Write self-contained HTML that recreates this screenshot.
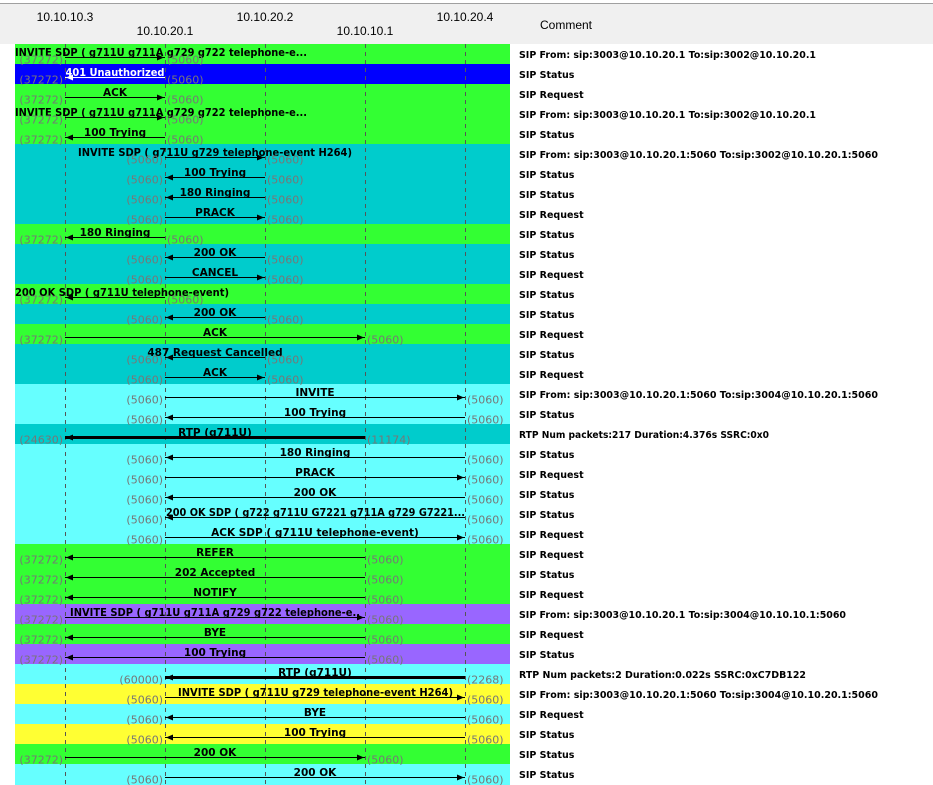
<!DOCTYPE html>
<html><head><meta charset="utf-8"><style>
html,body{margin:0;padding:0;background:#fff;width:933px;height:785px;overflow:hidden}
svg{display:block}
text{font-family:"DejaVu Sans","Liberation Sans",sans-serif}
.l{font-size:10.5px;font-weight:bold;text-anchor:middle;fill:#000}
.ls{font-size:10.5px;font-weight:bold;fill:#000}
.pe{font-size:11px;fill:#777;text-anchor:end}
.ps{font-size:11px;fill:#777}
.c{font-size:9.5px;font-weight:bold;fill:#000}
.h{font-family:"Liberation Sans",sans-serif;font-size:12px;fill:#000;text-anchor:middle}
line.a{stroke:#000;stroke-width:1}
line.t{stroke:#000;stroke-width:3}
</style></head><body>
<svg width="933" height="785" viewBox="0 0 933 785" xmlns="http://www.w3.org/2000/svg">
<rect x="0" y="0" width="933" height="785" fill="#fff"/>
<rect x="0" y="4" width="933" height="40" fill="#f0f0f0"/>
<rect x="0" y="3" width="933" height="1" fill="#a0a0a0"/>
<text class="h" x="65" y="21">10.10.10.3</text>
<text class="h" x="165" y="35">10.10.20.1</text>
<text class="h" x="265" y="21">10.10.20.2</text>
<text class="h" x="365" y="35">10.10.10.1</text>
<text class="h" x="465" y="21">10.10.20.4</text>
<text x="540" y="29" style="font-family:'Liberation Sans',sans-serif;font-size:12px">Comment</text>

<g>
<rect x="15" y="44" width="495" height="20" fill="#33ff33"/>
<rect x="15" y="64" width="495" height="20" fill="#0000ff"/>
<rect x="15" y="84" width="495" height="60" fill="#33ff33"/>
<rect x="15" y="144" width="495" height="80" fill="#00cccc"/>
<rect x="15" y="224" width="495" height="20" fill="#33ff33"/>
<rect x="15" y="244" width="495" height="40" fill="#00cccc"/>
<rect x="15" y="284" width="495" height="20" fill="#33ff33"/>
<rect x="15" y="304" width="495" height="20" fill="#00cccc"/>
<rect x="15" y="324" width="495" height="20" fill="#33ff33"/>
<rect x="15" y="344" width="495" height="40" fill="#00cccc"/>
<rect x="15" y="384" width="495" height="40" fill="#66ffff"/>
<rect x="15" y="424" width="495" height="20" fill="#00cccc"/>
<rect x="15" y="444" width="495" height="100" fill="#66ffff"/>
<rect x="15" y="544" width="495" height="60" fill="#33ff33"/>
<rect x="15" y="604" width="495" height="20" fill="#9966ff"/>
<rect x="15" y="624" width="495" height="20" fill="#33ff33"/>
<rect x="15" y="644" width="495" height="20" fill="#9966ff"/>
<rect x="15" y="664" width="495" height="20" fill="#66ffff"/>
<rect x="15" y="684" width="495" height="20" fill="#ffff33"/>
<rect x="15" y="704" width="495" height="20" fill="#66ffff"/>
<rect x="15" y="724" width="495" height="20" fill="#ffff33"/>
<rect x="15" y="744" width="495" height="20" fill="#33ff33"/>
<rect x="15" y="764" width="495" height="21" fill="#66ffff"/>
</g>
<g stroke="#555" stroke-width="1" stroke-dasharray="4,4">
<line x1="65.5" y1="44" x2="65.5" y2="785"/>
<line x1="165.5" y1="44" x2="165.5" y2="785"/>
<line x1="265.5" y1="44" x2="265.5" y2="785"/>
<line x1="365.5" y1="44" x2="365.5" y2="785"/>
<line x1="465.5" y1="44" x2="465.5" y2="785"/>
</g>

<g transform="translate(0,44)"><line class="a" x1="65" x2="165" y1="13.5" y2="13.5"/><polygon points="164,13.5 157,10.5 157,16.5"/>
<text class="ls" x="15" y="12" textLength="292" lengthAdjust="spacingAndGlyphs">INVITE SDP ( g711U g711A g729 g722 telephone-e...</text>
<text class="pe" x="63" y="19.5">(37272)</text><text class="ps" x="167" y="19.5">(5060)</text>
<text class="c" x="519" y="14" textLength="297" lengthAdjust="spacingAndGlyphs">SIP From: sip:3003@10.10.20.1 To:sip:3002@10.10.20.1</text></g>
<g transform="translate(0,64)"><line x1="65" x2="165" y1="13.5" y2="13.5" stroke="#fff"/><polygon points="66,13.5 73,10.5 73,16.5" fill="#fff"/>
<text class="l" x="115" y="12" style="fill:#fff;text-decoration:underline" textLength="99" lengthAdjust="spacingAndGlyphs">401 Unauthorized</text>
<text class="pe" x="63" y="19.5">(37272)</text><text class="ps" x="167" y="19.5">(5060)</text>
<text class="c" x="519" y="14">SIP Status</text></g>
<g transform="translate(0,84)"><line class="a" x1="65" x2="165" y1="13.5" y2="13.5"/><polygon points="164,13.5 157,10.5 157,16.5"/>
<text class="l" x="115" y="12">ACK</text>
<text class="pe" x="63" y="19.5">(37272)</text><text class="ps" x="167" y="19.5">(5060)</text>
<text class="c" x="519" y="14">SIP Request</text></g>
<g transform="translate(0,104)"><line class="a" x1="65" x2="165" y1="13.5" y2="13.5"/><polygon points="164,13.5 157,10.5 157,16.5"/>
<text class="ls" x="15" y="12" textLength="292" lengthAdjust="spacingAndGlyphs">INVITE SDP ( g711U g711A g729 g722 telephone-e...</text>
<text class="pe" x="63" y="19.5">(37272)</text><text class="ps" x="167" y="19.5">(5060)</text>
<text class="c" x="519" y="14" textLength="297" lengthAdjust="spacingAndGlyphs">SIP From: sip:3003@10.10.20.1 To:sip:3002@10.10.20.1</text></g>
<g transform="translate(0,124)"><line class="a" x1="65" x2="165" y1="13.5" y2="13.5"/><polygon points="66,13.5 73,10.5 73,16.5"/>
<text class="l" x="115" y="12">100 Trying</text>
<text class="pe" x="63" y="19.5">(37272)</text><text class="ps" x="167" y="19.5">(5060)</text>
<text class="c" x="519" y="14">SIP Status</text></g>
<g transform="translate(0,144)"><line class="a" x1="165" x2="265" y1="13.5" y2="13.5"/><polygon points="264,13.5 257,10.5 257,16.5"/>
<text class="ls" x="78" y="12" textLength="274" lengthAdjust="spacingAndGlyphs">INVITE SDP ( g711U g729 telephone-event H264)</text>
<text class="pe" x="163" y="19.5">(5060)</text><text class="ps" x="267" y="19.5">(5060)</text>
<text class="c" x="519" y="14" textLength="359" lengthAdjust="spacingAndGlyphs">SIP From: sip:3003@10.10.20.1:5060 To:sip:3002@10.10.20.1:5060</text></g>
<g transform="translate(0,164)"><line class="a" x1="165" x2="265" y1="13.5" y2="13.5"/><polygon points="166,13.5 173,10.5 173,16.5"/>
<text class="l" x="215" y="12">100 Trying</text>
<text class="pe" x="163" y="19.5">(5060)</text><text class="ps" x="267" y="19.5">(5060)</text>
<text class="c" x="519" y="14">SIP Status</text></g>
<g transform="translate(0,184)"><line class="a" x1="165" x2="265" y1="13.5" y2="13.5"/><polygon points="166,13.5 173,10.5 173,16.5"/>
<text class="l" x="215" y="12">180 Ringing</text>
<text class="pe" x="163" y="19.5">(5060)</text><text class="ps" x="267" y="19.5">(5060)</text>
<text class="c" x="519" y="14">SIP Status</text></g>
<g transform="translate(0,204)"><line class="a" x1="165" x2="265" y1="13.5" y2="13.5"/><polygon points="264,13.5 257,10.5 257,16.5"/>
<text class="l" x="215" y="12">PRACK</text>
<text class="pe" x="163" y="19.5">(5060)</text><text class="ps" x="267" y="19.5">(5060)</text>
<text class="c" x="519" y="14">SIP Request</text></g>
<g transform="translate(0,224)"><line class="a" x1="65" x2="165" y1="13.5" y2="13.5"/><polygon points="66,13.5 73,10.5 73,16.5"/>
<text class="l" x="115" y="12">180 Ringing</text>
<text class="pe" x="63" y="19.5">(37272)</text><text class="ps" x="167" y="19.5">(5060)</text>
<text class="c" x="519" y="14">SIP Status</text></g>
<g transform="translate(0,244)"><line class="a" x1="165" x2="265" y1="13.5" y2="13.5"/><polygon points="166,13.5 173,10.5 173,16.5"/>
<text class="l" x="215" y="12">200 OK</text>
<text class="pe" x="163" y="19.5">(5060)</text><text class="ps" x="267" y="19.5">(5060)</text>
<text class="c" x="519" y="14">SIP Status</text></g>
<g transform="translate(0,264)"><line class="a" x1="165" x2="265" y1="13.5" y2="13.5"/><polygon points="264,13.5 257,10.5 257,16.5"/>
<text class="l" x="215" y="12">CANCEL</text>
<text class="pe" x="163" y="19.5">(5060)</text><text class="ps" x="267" y="19.5">(5060)</text>
<text class="c" x="519" y="14">SIP Request</text></g>
<g transform="translate(0,284)"><line class="a" x1="65" x2="165" y1="13.5" y2="13.5"/><polygon points="66,13.5 73,10.5 73,16.5"/>
<text class="ls" x="15" y="12" textLength="214" lengthAdjust="spacingAndGlyphs">200 OK SDP ( g711U telephone-event)</text>
<text class="pe" x="63" y="19.5">(37272)</text><text class="ps" x="167" y="19.5">(5060)</text>
<text class="c" x="519" y="14">SIP Status</text></g>
<g transform="translate(0,304)"><line class="a" x1="165" x2="265" y1="13.5" y2="13.5"/><polygon points="166,13.5 173,10.5 173,16.5"/>
<text class="l" x="215" y="12">200 OK</text>
<text class="pe" x="163" y="19.5">(5060)</text><text class="ps" x="267" y="19.5">(5060)</text>
<text class="c" x="519" y="14">SIP Status</text></g>
<g transform="translate(0,324)"><line class="a" x1="65" x2="365" y1="13.5" y2="13.5"/><polygon points="364,13.5 357,10.5 357,16.5"/>
<text class="l" x="215" y="12">ACK</text>
<text class="pe" x="63" y="19.5">(37272)</text><text class="ps" x="367" y="19.5">(5060)</text>
<text class="c" x="519" y="14">SIP Request</text></g>
<g transform="translate(0,344)"><line class="a" x1="165" x2="265" y1="13.5" y2="13.5"/><polygon points="166,13.5 173,10.5 173,16.5"/>
<text class="l" x="215" y="12">487 Request Cancelled</text>
<text class="pe" x="163" y="19.5">(5060)</text><text class="ps" x="267" y="19.5">(5060)</text>
<text class="c" x="519" y="14">SIP Status</text></g>
<g transform="translate(0,364)"><line class="a" x1="165" x2="265" y1="13.5" y2="13.5"/><polygon points="264,13.5 257,10.5 257,16.5"/>
<text class="l" x="215" y="12">ACK</text>
<text class="pe" x="163" y="19.5">(5060)</text><text class="ps" x="267" y="19.5">(5060)</text>
<text class="c" x="519" y="14">SIP Request</text></g>
<g transform="translate(0,384)"><line class="a" x1="165" x2="465" y1="13.5" y2="13.5"/><polygon points="464,13.5 457,10.5 457,16.5"/>
<text class="l" x="315" y="12">INVITE</text>
<text class="pe" x="163" y="19.5">(5060)</text><text class="ps" x="467" y="19.5">(5060)</text>
<text class="c" x="519" y="14" textLength="359" lengthAdjust="spacingAndGlyphs">SIP From: sip:3003@10.10.20.1:5060 To:sip:3004@10.10.20.1:5060</text></g>
<g transform="translate(0,404)"><line class="a" x1="165" x2="465" y1="13.5" y2="13.5"/><polygon points="166,13.5 173,10.5 173,16.5"/>
<text class="l" x="315" y="12">100 Trying</text>
<text class="pe" x="163" y="19.5">(5060)</text><text class="ps" x="467" y="19.5">(5060)</text>
<text class="c" x="519" y="14">SIP Status</text></g>
<g transform="translate(0,424)"><line class="t" x1="65" x2="365" y1="13.5" y2="13.5"/><polygon points="66,13.5 73,10.5 73,16.5"/>
<text class="l" x="215" y="12">RTP (g711U)</text>
<text class="pe" x="63" y="19.5">(24630)</text><text class="ps" x="367" y="19.5">(11174)</text>
<text class="c" x="519" y="14" textLength="250" lengthAdjust="spacingAndGlyphs">RTP Num packets:217  Duration:4.376s SSRC:0x0</text></g>
<g transform="translate(0,444)"><line class="a" x1="165" x2="465" y1="13.5" y2="13.5"/><polygon points="166,13.5 173,10.5 173,16.5"/>
<text class="l" x="315" y="12">180 Ringing</text>
<text class="pe" x="163" y="19.5">(5060)</text><text class="ps" x="467" y="19.5">(5060)</text>
<text class="c" x="519" y="14">SIP Status</text></g>
<g transform="translate(0,464)"><line class="a" x1="165" x2="465" y1="13.5" y2="13.5"/><polygon points="464,13.5 457,10.5 457,16.5"/>
<text class="l" x="315" y="12">PRACK</text>
<text class="pe" x="163" y="19.5">(5060)</text><text class="ps" x="467" y="19.5">(5060)</text>
<text class="c" x="519" y="14">SIP Request</text></g>
<g transform="translate(0,484)"><line class="a" x1="165" x2="465" y1="13.5" y2="13.5"/><polygon points="166,13.5 173,10.5 173,16.5"/>
<text class="l" x="315" y="12">200 OK</text>
<text class="pe" x="163" y="19.5">(5060)</text><text class="ps" x="467" y="19.5">(5060)</text>
<text class="c" x="519" y="14">SIP Status</text></g>
<g transform="translate(0,504)"><line class="a" x1="165" x2="465" y1="13.5" y2="13.5"/><polygon points="166,13.5 173,10.5 173,16.5"/>
<text class="ls" x="166" y="12" textLength="299" lengthAdjust="spacingAndGlyphs">200 OK SDP ( g722 g711U G7221 g711A g729 G7221...</text>
<text class="pe" x="163" y="19.5">(5060)</text><text class="ps" x="467" y="19.5">(5060)</text>
<text class="c" x="519" y="14">SIP Status</text></g>
<g transform="translate(0,524)"><line class="a" x1="165" x2="465" y1="13.5" y2="13.5"/><polygon points="464,13.5 457,10.5 457,16.5"/>
<text class="l" x="315" y="12">ACK SDP ( g711U telephone-event)</text>
<text class="pe" x="163" y="19.5">(5060)</text><text class="ps" x="467" y="19.5">(5060)</text>
<text class="c" x="519" y="14">SIP Request</text></g>
<g transform="translate(0,544)"><line class="a" x1="65" x2="365" y1="13.5" y2="13.5"/><polygon points="66,13.5 73,10.5 73,16.5"/>
<text class="l" x="215" y="12">REFER</text>
<text class="pe" x="63" y="19.5">(37272)</text><text class="ps" x="367" y="19.5">(5060)</text>
<text class="c" x="519" y="14">SIP Request</text></g>
<g transform="translate(0,564)"><line class="a" x1="65" x2="365" y1="13.5" y2="13.5"/><polygon points="66,13.5 73,10.5 73,16.5"/>
<text class="l" x="215" y="12">202 Accepted</text>
<text class="pe" x="63" y="19.5">(37272)</text><text class="ps" x="367" y="19.5">(5060)</text>
<text class="c" x="519" y="14">SIP Status</text></g>
<g transform="translate(0,584)"><line class="a" x1="65" x2="365" y1="13.5" y2="13.5"/><polygon points="66,13.5 73,10.5 73,16.5"/>
<text class="l" x="215" y="12">NOTIFY</text>
<text class="pe" x="63" y="19.5">(37272)</text><text class="ps" x="367" y="19.5">(5060)</text>
<text class="c" x="519" y="14">SIP Request</text></g>
<g transform="translate(0,604)"><line class="a" x1="65" x2="365" y1="13.5" y2="13.5"/><polygon points="364,13.5 357,10.5 357,16.5"/>
<text class="ls" x="70" y="12" textLength="290" lengthAdjust="spacingAndGlyphs">INVITE SDP ( g711U g711A g729 g722 telephone-e..</text>
<text class="pe" x="63" y="19.5">(37272)</text><text class="ps" x="367" y="19.5">(5060)</text>
<text class="c" x="519" y="14" textLength="327" lengthAdjust="spacingAndGlyphs">SIP From: sip:3003@10.10.20.1 To:sip:3004@10.10.10.1:5060</text></g>
<g transform="translate(0,624)"><line class="a" x1="65" x2="365" y1="13.5" y2="13.5"/><polygon points="66,13.5 73,10.5 73,16.5"/>
<text class="l" x="215" y="12">BYE</text>
<text class="pe" x="63" y="19.5">(37272)</text><text class="ps" x="367" y="19.5">(5060)</text>
<text class="c" x="519" y="14">SIP Request</text></g>
<g transform="translate(0,644)"><line class="a" x1="65" x2="365" y1="13.5" y2="13.5"/><polygon points="66,13.5 73,10.5 73,16.5"/>
<text class="l" x="215" y="12">100 Trying</text>
<text class="pe" x="63" y="19.5">(37272)</text><text class="ps" x="367" y="19.5">(5060)</text>
<text class="c" x="519" y="14">SIP Status</text></g>
<g transform="translate(0,664)"><line class="t" x1="165" x2="465" y1="13.5" y2="13.5"/><polygon points="166,13.5 173,10.5 173,16.5"/>
<text class="l" x="315" y="12">RTP (g711U)</text>
<text class="pe" x="163" y="19.5">(60000)</text><text class="ps" x="467" y="19.5">(2268)</text>
<text class="c" x="519" y="14" textLength="287" lengthAdjust="spacingAndGlyphs">RTP Num packets:2  Duration:0.022s SSRC:0xC7DB122</text></g>
<g transform="translate(0,684)"><line class="a" x1="165" x2="465" y1="13.5" y2="13.5"/><polygon points="464,13.5 457,10.5 457,16.5"/>
<text class="ls" x="178" y="12" textLength="275" lengthAdjust="spacingAndGlyphs">INVITE SDP ( g711U g729 telephone-event H264)</text>
<text class="pe" x="163" y="19.5">(5060)</text><text class="ps" x="467" y="19.5">(5060)</text>
<text class="c" x="519" y="14" textLength="359" lengthAdjust="spacingAndGlyphs">SIP From: sip:3003@10.10.20.1:5060 To:sip:3004@10.10.20.1:5060</text></g>
<g transform="translate(0,704)"><line class="a" x1="165" x2="465" y1="13.5" y2="13.5"/><polygon points="166,13.5 173,10.5 173,16.5"/>
<text class="l" x="315" y="12">BYE</text>
<text class="pe" x="163" y="19.5">(5060)</text><text class="ps" x="467" y="19.5">(5060)</text>
<text class="c" x="519" y="14">SIP Request</text></g>
<g transform="translate(0,724)"><line class="a" x1="165" x2="465" y1="13.5" y2="13.5"/><polygon points="166,13.5 173,10.5 173,16.5"/>
<text class="l" x="315" y="12">100 Trying</text>
<text class="pe" x="163" y="19.5">(5060)</text><text class="ps" x="467" y="19.5">(5060)</text>
<text class="c" x="519" y="14">SIP Status</text></g>
<g transform="translate(0,744)"><line class="a" x1="65" x2="365" y1="13.5" y2="13.5"/><polygon points="364,13.5 357,10.5 357,16.5"/>
<text class="l" x="215" y="12">200 OK</text>
<text class="pe" x="63" y="19.5">(37272)</text><text class="ps" x="367" y="19.5">(5060)</text>
<text class="c" x="519" y="14">SIP Status</text></g>
<g transform="translate(0,764)"><line class="a" x1="165" x2="465" y1="13.5" y2="13.5"/><polygon points="464,13.5 457,10.5 457,16.5"/>
<text class="l" x="315" y="12">200 OK</text>
<text class="pe" x="163" y="19.5">(5060)</text><text class="ps" x="467" y="19.5">(5060)</text>
<text class="c" x="519" y="14">SIP Status</text></g>
</svg>
</body></html>
